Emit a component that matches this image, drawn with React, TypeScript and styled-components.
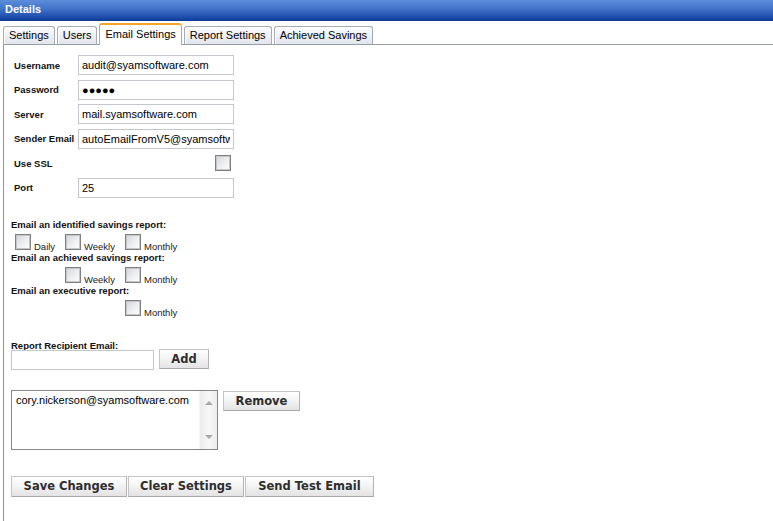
import { createGlobalStyle, styled } from "styled-components"

const GlobalStyle = createGlobalStyle`
  html, body {
    margin: 0;
    padding: 0;
    background: #ffffff;
  }
  body {
    font-family: "Liberation Sans", Arial, sans-serif;
    color: #000;
  }
  #root {
    height: 521px;
    overflow: hidden;
  }
`

const Page = styled.div`
  height: 521px;
  display: flex;
  flex-direction: column;
`

const TitleBar = styled.div`
  height: 21px;
  box-sizing: border-box;
  padding: 0 0 3px 5px;
  line-height: 18px;
  font-size: 11px;
  font-weight: bold;
  color: #ffffff;
  background: linear-gradient(#5d8edb 0%, #3f71c8 45%, #1a4aa8 85%, #0b3893 100%);
`

const TabArea = styled.div`
  flex: 1;
  display: flex;
  flex-direction: column;
  margin-left: 3px;
`

const TabStrip = styled.div`
  display: flex;
  align-items: flex-end;
  gap: 2px;
  height: 24px;
  box-sizing: border-box;
  padding-top: 3px;
  border-bottom: 1px solid #969ea3;
`

const Tab = styled.div<{ $active?: boolean }>`
  box-sizing: border-box;
  padding: 0 5px;
  font-size: 11px;
  color: #000;
  white-space: nowrap;
  border: 1px solid #a4acb4;
  border-bottom: none;
  border-radius: 3px 3px 0 0;
  height: ${p => (p.$active ? "22px" : "18px")};
  line-height: ${p => (p.$active ? "19px" : "16px")};
  margin-bottom: ${p => (p.$active ? "-1px" : "0")};
  background: ${p => (p.$active ? "#ffffff" : "linear-gradient(#fdfdfe, #e2e4ed)")};
  border-top: ${p => (p.$active ? "2px solid #f5a62a" : "1px solid #a4acb4")};
  box-shadow: ${p => (p.$active ? "none" : "inset 1px 1px 0 #ffffff")};
`

const Panel = styled.div`
  flex: 1;
  border-left: 1px solid #8f979d;
  padding: 10px 0 0 7px;
`

const FieldGrid = styled.div`
  display: grid;
  grid-template-columns: 64px 156px;
  grid-auto-rows: 20px;
  row-gap: 4.6px;
  align-items: center;
  padding-left: 3px;
`

const FieldLabel = styled.label`
  font-size: 9.5px;
  font-weight: bold;
  color: #111;
  white-space: nowrap;
`

const TextInput = styled.input<{ $w?: number }>`
  box-sizing: border-box;
  width: ${p => p.$w ?? 156}px;
  height: 20px;
  border: 1px solid #c3c7cb;
  padding: 0 3px;
  margin: 0;
  font-family: "Liberation Sans", Arial, sans-serif;
  font-size: 11px;
  color: #000;
  background: #fff;
  outline: none;
`

const Box = styled.span<{ $end?: boolean }>`
  display: inline-block;
  width: 16px;
  height: 16px;
  box-sizing: border-box;
  border: 1px solid #808080;
  box-shadow: inset 0 0 0 1px #c4c6c9;
  background: linear-gradient(135deg, #d2d5da 0%, #eeeff1 55%, #ffffff 100%);
  justify-self: ${p => (p.$end ? "end" : "auto")};
  margin-right: ${p => (p.$end ? "3px" : "0")};
`

const ReportSection = styled.div`
  margin-top: 20px;
`

const Heading = styled.div<{ $tight?: boolean }>`
  font-size: 9.5px;
  font-weight: bold;
  color: #111;
  line-height: ${p => (p.$tight ? "8px" : "13px")};
  white-space: nowrap;
`

const CheckRow = styled.div`
  display: grid;
  grid-template-columns: 50px 60px auto;
  height: 20px;
  box-sizing: border-box;
  padding-top: 3px;
`

const CheckOption = styled.div<{ $col: number }>`
  grid-column: ${p => p.$col};
  display: flex;
  align-items: baseline;
  gap: 3px;
  padding-left: 4px;
  font-size: 9.5px;
  color: #222;
`

const RecipientBlock = styled.div`
  margin-top: 25px;
`

const InlineRow = styled.div<{ $top: number }>`
  display: flex;
  align-items: flex-start;
  gap: 5px;
  margin-top: ${p => p.$top}px;
`

const ListBox = styled.div`
  width: 207px;
  height: 60px;
  box-sizing: border-box;
  border: 1px solid #828790;
  display: flex;
  background: #fff;
`

const ListItems = styled.div`
  flex: 1;
  padding: 3px 4px;
  font-size: 11px;
  color: #000;
  white-space: nowrap;
  overflow: hidden;
`

const ScrollTrack = styled.div`
  width: 18px;
  display: flex;
  flex-direction: column;
  justify-content: space-between;
  align-items: center;
  padding: 10px 0 10px;
  box-sizing: border-box;
  background: linear-gradient(90deg, #ececec, #f7f7f7 50%, #ececec);
  border-left: 1px solid #f4f4f4;
`

const Arrow = styled.span<{ $down?: boolean }>`
  width: 0;
  height: 0;
  border-left: 4px solid transparent;
  border-right: 4px solid transparent;
  border-bottom: ${p => (p.$down ? "none" : "4px solid #a9a9a9")};
  border-top: ${p => (p.$down ? "4px solid #a9a9a9" : "none")};
`

const Button = styled.button<{ $w: number; $h?: number; $shift?: number }>`
  width: ${p => p.$w}px;
  height: ${p => p.$h ?? 20}px;
  margin: ${p => p.$shift ?? 0}px 0 0 0;
  padding: 0;
  box-sizing: border-box;
  border: 1px solid #c4c4c4;
  border-bottom-color: #a9a9a9;
  border-right-color: #b2b2b2;
  background: linear-gradient(#ffffff 0%, #f4f4f4 45%, #e3e3e3 100%);
  font-family: "DejaVu Sans", Verdana, sans-serif;
  font-size: 11.5px;
  font-weight: bold;
  color: #2e2e2e;
  white-space: nowrap;
`

const ActionBar = styled.div`
  display: flex;
  gap: 1px;
  margin-top: 26px;
`

const tabs = ["Settings", "Users", "Email Settings", "Report Settings", "Achieved Savings"]

export default function App() {
  return (
    <>
      <GlobalStyle />
      <Page>
        <TitleBar>Details</TitleBar>
        <TabArea>
          <TabStrip>
            {tabs.map(t => (
              <Tab key={t} $active={t === "Email Settings"}>
                {t}
              </Tab>
            ))}
          </TabStrip>
          <Panel>
            <FieldGrid>
              <FieldLabel>Username</FieldLabel>
              <TextInput readOnly value="audit@syamsoftware.com" />
              <FieldLabel>Password</FieldLabel>
              <TextInput readOnly value="●●●●●" />
              <FieldLabel>Server</FieldLabel>
              <TextInput readOnly value="mail.syamsoftware.com" />
              <FieldLabel>Sender Email</FieldLabel>
              <TextInput readOnly value="autoEmailFromV5@syamsoftware.com" />
              <FieldLabel>Use SSL</FieldLabel>
              <Box $end />
              <FieldLabel>Port</FieldLabel>
              <TextInput readOnly value="25" />
            </FieldGrid>

            <ReportSection>
              <Heading>Email an identified savings report:</Heading>
              <CheckRow>
                <CheckOption $col={1}><Box />Daily</CheckOption>
                <CheckOption $col={2}><Box />Weekly</CheckOption>
                <CheckOption $col={3}><Box />Monthly</CheckOption>
              </CheckRow>
              <Heading>Email an achieved savings report:</Heading>
              <CheckRow>
                <CheckOption $col={2}><Box />Weekly</CheckOption>
                <CheckOption $col={3}><Box />Monthly</CheckOption>
              </CheckRow>
              <Heading>Email an executive report:</Heading>
              <CheckRow>
                <CheckOption $col={3}><Box />Monthly</CheckOption>
              </CheckRow>
            </ReportSection>

            <RecipientBlock>
              <Heading $tight>Report Recipient Email:</Heading>
              <InlineRow $top={0}>
                <TextInput $w={143} readOnly value="" />
                <Button $w={50} $shift={-1}>Add</Button>
              </InlineRow>
              <InlineRow $top={20}>
                <ListBox>
                  <ListItems>cory.nickerson@syamsoftware.com</ListItems>
                  <ScrollTrack>
                    <Arrow />
                    <Arrow $down />
                  </ScrollTrack>
                </ListBox>
                <Button $w={77} $shift={1}>Remove</Button>
              </InlineRow>
            </RecipientBlock>

            <ActionBar>
              <Button $w={116} $h={21}>Save Changes</Button>
              <Button $w={116} $h={21}>Clear Settings</Button>
              <Button $w={129} $h={21}>Send Test Email</Button>
            </ActionBar>
          </Panel>
        </TabArea>
      </Page>
    </>
  )
}
